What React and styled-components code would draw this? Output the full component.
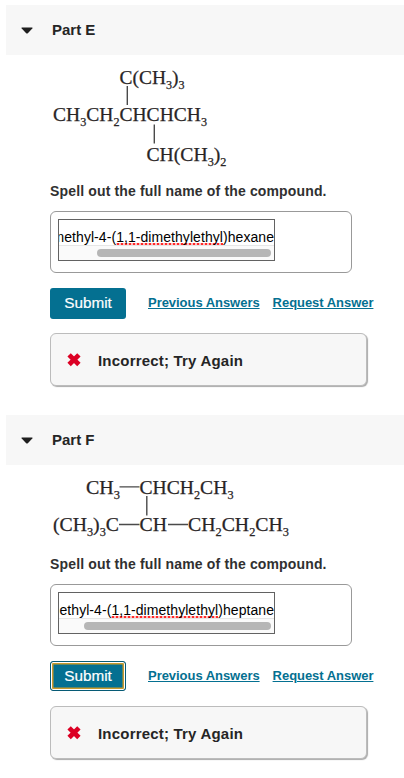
import * as React from 'react'
import styled, { createGlobalStyle } from 'styled-components'

const GlobalStyle = createGlobalStyle`
  body {
    margin: 0;
    background: #fff;
    color: #252525;
    font-family: "Liberation Sans", Arial, sans-serif;
  }
`

// "CH_3" -> CH with a lowered 3
const Group = ({ x, y, width, children }) => {
    const parts = children.split(/(_\d)/).filter(Boolean)

    return (
        <text x={x} y={y} textLength={width} lengthAdjust="spacingAndGlyphs">
            {parts.map((part, i) => {
                const lowered = part[0] === '_'
                const wasLowered = i > 0 && parts[i - 1][0] === '_'
                const dy = (lowered ? 5 : 0) - (wasLowered ? 5 : 0)
                return (
                    <tspan key={i} dy={dy} fontSize={lowered ? 12 : 19.3}>
                        {lowered ? part[1] : part}
                    </tspan>
                )
            })}
        </text>
    )
}

const FormulaE = () => (
    <Formula width="260" height="127" viewBox="50 55 260 127">
        <Group x={119.5} y={83.5} width={65}>C(CH_3)_3</Group>
        <path d="M127.3 86V105M154.3 124.5V143.5" />
        <Group x={53} y={121} width={154}>CH_3CH_2CHCHCH_3</Group>
        <Group x={146.5} y={160.5} width={80}>CH(CH_3)_2</Group>
    </Formula>
)

const FormulaF = () => (
    <Formula width="260" height="90" viewBox="50 465 260 90">
        <Group x={86} y={493.6} width={34}>CH_3</Group>
        <Group x={139.5} y={493.6} width={94}>CHCH_2CH_3</Group>
        <path d="M119.5 486.9H139.5M146.8 496V515.5M119 524.5H139.5M168 524.5H188" />
        <Group x={53} y={530.7} width={66}>(CH_3)_3C</Group>
        <Group x={139.5} y={530.7} width={27.5}>CH</Group>
        <Group x={188} y={530.7} width={101}>CH_2CH_2CH_3</Group>
    </Formula>
)

const Part = ({ title, formula, start, end, thumb, focused }) => (
    <Section>
        <Header>
            <Caret width="12" height="7" viewBox="0 0 12 7">
                <path d="M1 .5H11Q12 .6 11.3 1.4L6.8 6.2Q6 7 5.2 6.2L.7 1.4Q0 .6 1 .5Z" />
            </Caret>
            <h2>{title}</h2>
        </Header>
        <Content>
            {formula}
            <Prompt>Spell out the full name of the compound.</Prompt>
            <AnswerBox>
                <Field>
                    <Answer>
                        <span>{start}<Misspelled>1,1-dimethylethyl</Misspelled>{end}</span>
                    </Answer>
                    <Track>
                        <Thumb $width={thumb} />
                    </Track>
                </Field>
            </AnswerBox>
            <Actions>
                <Submit $focused={focused}>Submit</Submit>
                <Link href="#">Previous Answers</Link>
                <Link href="#">Request Answer</Link>
            </Actions>
            <Feedback>
                <svg width="16" height="16" viewBox="0 0 16 16">
                    <path
                        d="M3.1 2.9L12.9 12.5M12.9 2.9L3.1 12.5"
                        stroke="#dc0024"
                        strokeWidth="4.8"
                    />
                </svg>
                <p>Incorrect; Try Again</p>
            </Feedback>
        </Content>
    </Section>
)

const App = () => (
    <Page>
        <GlobalStyle />
        <Part title="Part E" formula={<FormulaE />} start="methyl-4-(" end=")hexane" thumb={174} />
        <Part title="Part F" formula={<FormulaF />} start="ethyl-4-(" end=")heptane" thumb={187} focused />
    </Page>
)

const Page = styled.main`
  box-sizing: border-box;
  height: 778px;
  padding: 5px 0 0 6px;
  overflow: hidden;
`

const Section = styled.section`
  margin-bottom: 29px;
`

const Header = styled.header`
  display: flex;
  align-items: center;
  height: 50px;
  background: #f7f7f7;

  h2 {
    margin: 0 0 0 19px;
    font-size: 15px;
    line-height: 18px;
  }
`

const Caret = styled.svg`
  margin-left: 15px;
  fill: #1f1f1f;
`

const Content = styled.div`
  padding-left: 44px;
`

const Formula = styled.svg`
  display: block;
  font-family: "Liberation Serif", "Times New Roman", serif;
  fill: #292526;

  text {
    stroke: #292526;
    stroke-width: 0.25;
  }

  path {
    stroke: #4a4a4a;
    stroke-width: 1.4;
  }
`

const Prompt = styled.p`
  margin: 0 0 11px;
  font-size: 14px;
  font-weight: 700;
  line-height: 18px;
  letter-spacing: 0.15px;
  color: #303030;
`

const AnswerBox = styled.div`
  box-sizing: border-box;
  width: 302px;
  height: 62px;
  padding: 7px;
  border: 1px solid #999;
  border-radius: 6px;
`

const Field = styled.div`
  box-sizing: border-box;
  display: flex;
  flex-direction: column;
  width: 217px;
  height: 42px;
  border: 1px solid #626262;
`

const Answer = styled.div`
  display: flex;
  justify-content: flex-end;
  flex: 1;
  padding-top: 9px;
  overflow: hidden;
  font-size: 14px;
  line-height: 16px;
  letter-spacing: 0.06px;
  white-space: nowrap;
  color: #000;
`

const Misspelled = styled.span`
  background: radial-gradient(circle, #ff2a2a 1.1px, rgba(255, 42, 42, 0.15) 1.7px) 0 100% / 4px 2px repeat-x;
`

const Track = styled.div`
  box-sizing: border-box;
  display: flex;
  justify-content: flex-end;
  align-items: center;
  height: 15px;
  padding-right: 3px;
  border-top: 1px solid #e6e6e6;
  background: #fafafa;
`

const Thumb = styled.div`
  width: ${({ $width }) => $width}px;
  height: 8px;
  border-radius: 4px;
  background: #b6b6b6;
`

const Actions = styled.div`
  display: flex;
  align-items: flex-start;
  height: 45px;
  margin-top: 15px;
`

const Submit = styled.button`
  width: 76px;
  height: ${({ $focused }) => $focused ? 30 : 31}px;
  margin: 0 22px 0 0;
  padding: ${({ $focused }) => $focused ? 0 : '0 0 2px'};
  border: ${({ $focused }) => $focused ? '1px solid #065a75' : 0};
  border-radius: 3px;
  background: #047091;
  box-shadow: ${({ $focused }) => $focused ? 'inset 0 0 0 1px #fff, inset 0 0 0 2.5px #c99b2e' : 'none'};
  color: #fff;
  font: 15.3px/28px "Liberation Sans", Arial, sans-serif;
  -webkit-text-stroke: 0.2px #fff;
`

const Link = styled.a`
  margin-right: 13px;
  color: #047091;
  font-size: 13px;
  font-weight: 700;
  line-height: 30px;
  letter-spacing: -0.04px;
  white-space: nowrap;
  text-underline-offset: 1px;
  text-decoration-thickness: 1px;
`

const Feedback = styled.div`
  box-sizing: border-box;
  display: flex;
  align-items: center;
  width: 317px;
  height: 53px;
  padding-left: 15px;
  border: 1px solid #bcbcbc;
  border-radius: 6px;
  background: #f7f7f7;
  box-shadow: 1px 1px 1px #aaa;

  p {
    margin: 2px 0 0 16px;
    font-size: 15px;
    font-weight: 700;
    line-height: 18px;
    letter-spacing: 0.2px;
  }
`

export default App
